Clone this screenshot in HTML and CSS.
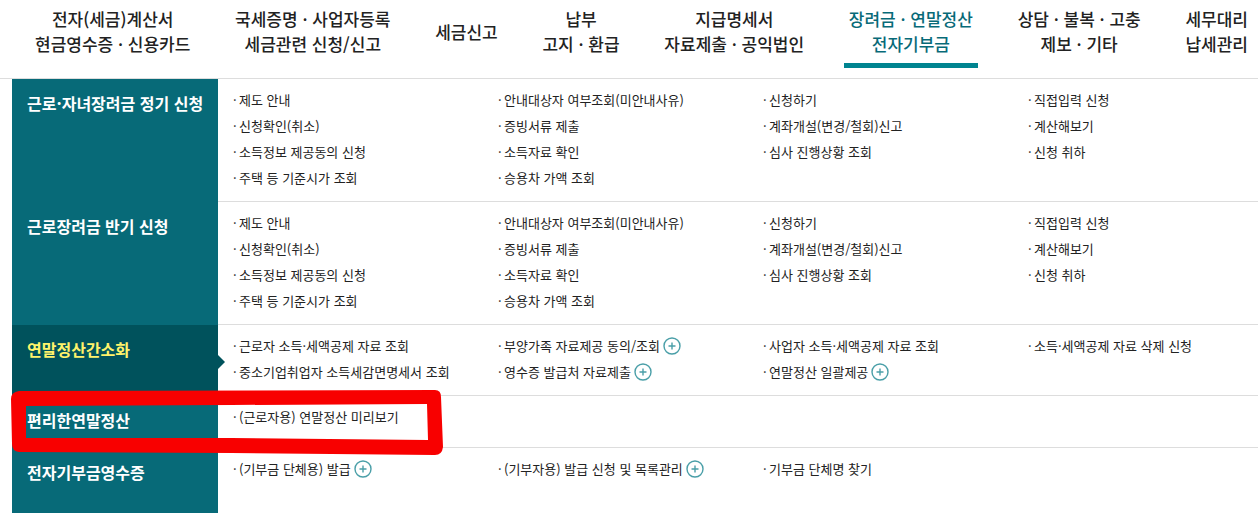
FILE: index.html
```
<!DOCTYPE html>
<html lang="ko">
<head>
  <meta charset="UTF-8" />
  <title>장려금 · 연말정산 · 전자기부금</title>
  <link rel="stylesheet" href="styles.css">
</head>
<body>
  <nav class="top-menu">
    <a href="#">전자(세금)계산서<br>현금영수증 · 신용카드</a>
    <a href="#">국세증명 · 사업자등록<br>세금관련 신청/신고</a>
    <a href="#">세금신고</a>
    <a href="#">납부<br>고지 · 환급</a>
    <a href="#">지급명세서<br>자료제출 · 공익법인</a>
    <a href="#" class="active">장려금 · 연말정산<br>전자기부금</a>
    <a href="#">상담 · 불복 · 고충<br>제보 · 기타</a>
    <a href="#">세무대리<br>납세관리</a>
  </nav>

  <main class="sub-menu">
    <section class="row">
      <h2>근로·자녀장려금 정기 신청</h2>
      <div class="links">
        <ul>
          <li><a href="#">제도 안내</a></li>
          <li><a href="#">신청확인(취소)</a></li>
          <li><a href="#">소득정보 제공동의 신청</a></li>
          <li><a href="#">주택 등 기준시가 조회</a></li>
        </ul>
        <ul>
          <li><a href="#">안내대상자 여부조회(미안내사유)</a></li>
          <li><a href="#">증빙서류 제출</a></li>
          <li><a href="#">소득자료 확인</a></li>
          <li><a href="#">승용차 가액 조회</a></li>
        </ul>
        <ul>
          <li><a href="#">신청하기</a></li>
          <li><a href="#">계좌개설(변경/철회)신고</a></li>
          <li><a href="#">심사 진행상황 조회</a></li>
        </ul>
        <ul>
          <li><a href="#">직접입력 신청</a></li>
          <li><a href="#">계산해보기</a></li>
          <li><a href="#">신청 취하</a></li>
        </ul>
      </div>
    </section>

    <section class="row">
      <h2>근로장려금 반기 신청</h2>
      <div class="links">
        <ul>
          <li><a href="#">제도 안내</a></li>
          <li><a href="#">신청확인(취소)</a></li>
          <li><a href="#">소득정보 제공동의 신청</a></li>
          <li><a href="#">주택 등 기준시가 조회</a></li>
        </ul>
        <ul>
          <li><a href="#">안내대상자 여부조회(미안내사유)</a></li>
          <li><a href="#">증빙서류 제출</a></li>
          <li><a href="#">소득자료 확인</a></li>
          <li><a href="#">승용차 가액 조회</a></li>
        </ul>
        <ul>
          <li><a href="#">신청하기</a></li>
          <li><a href="#">계좌개설(변경/철회)신고</a></li>
          <li><a href="#">심사 진행상황 조회</a></li>
        </ul>
        <ul>
          <li><a href="#">직접입력 신청</a></li>
          <li><a href="#">계산해보기</a></li>
          <li><a href="#">신청 취하</a></li>
        </ul>
      </div>
    </section>

    <section class="row current">
      <h2>연말정산간소화</h2>
      <div class="links">
        <ul>
          <li><a href="#">근로자 소득·세액공제 자료 조회</a></li>
          <li><a href="#">중소기업취업자 소득세감면명세서 조회</a></li>
        </ul>
        <ul>
          <li><a href="#">부양가족 자료제공 동의/조회</a><button class="plus" aria-label="펼치기"><svg viewBox="0 0 18 18"><circle cx="9" cy="9" r="8"/><path d="M5.5 9h7M9 5.5v7"/></svg></button></li>
          <li><a href="#">영수증 발급처 자료제출</a><button class="plus" aria-label="펼치기"><svg viewBox="0 0 18 18"><circle cx="9" cy="9" r="8"/><path d="M5.5 9h7M9 5.5v7"/></svg></button></li>
        </ul>
        <ul>
          <li><a href="#">사업자 소득·세액공제 자료 조회</a></li>
          <li><a href="#">연말정산 일괄제공</a><button class="plus" aria-label="펼치기"><svg viewBox="0 0 18 18"><circle cx="9" cy="9" r="8"/><path d="M5.5 9h7M9 5.5v7"/></svg></button></li>
        </ul>
        <ul>
          <li><a href="#">소득·세액공제 자료 삭제 신청</a></li>
        </ul>
      </div>
    </section>

    <section class="row">
      <h2>편리한연말정산</h2>
      <div class="links">
        <ul>
          <li><a href="#">(근로자용) 연말정산 미리보기</a></li>
        </ul>
      </div>
      <!-- red marker frame -->
      <svg class="marker" viewBox="0 0 432 66" aria-hidden="true">
        <path fill-rule="evenodd" d="M8 2 L424 1 Q430 1 430 8 L432 58 Q431 66 424 66 L220 64 L8 63 Q1 62 1 55 L0 10 Q0 3 8 2 Z M15 17 L15 49 L220 49 L417 51 L416 15 L220 16 Z"/>
      </svg>
    </section>

    <section class="row">
      <h2>전자기부금영수증</h2>
      <div class="links">
        <ul>
          <li><a href="#">(기부금 단체용) 발급</a><button class="plus" aria-label="펼치기"><svg viewBox="0 0 18 18"><circle cx="9" cy="9" r="8"/><path d="M5.5 9h7M9 5.5v7"/></svg></button></li>
        </ul>
        <ul>
          <li><a href="#">(기부자용) 발급 신청 및 목록관리</a><button class="plus" aria-label="펼치기"><svg viewBox="0 0 18 18"><circle cx="9" cy="9" r="8"/><path d="M5.5 9h7M9 5.5v7"/></svg></button></li>
        </ul>
        <ul>
          <li><a href="#">기부금 단체명 찾기</a></li>
        </ul>
      </div>
    </section>
  </main>
</body>
</html>
```
FILE: styles.css
```
* {
  box-sizing: border-box;
}

body {
  margin: 0;
  min-height: 100vh;
  display: flex;
  flex-direction: column;
  font-family: "Noto Sans CJK KR", sans-serif;
  background: #fff;
  color: #222;
}

a {
  color: inherit;
  text-decoration: none;
}

/* Top menu */
.top-menu {
  display: flex;
  justify-content: space-between;
  padding: 6px 10px 10px 35px;
  border-bottom: 1px solid #ddd;
  font-size: 17px;
  font-weight: 500;
  line-height: 25px;
  text-align: center;
  white-space: nowrap;
}

.top-menu a {
  display: flex;
  flex-direction: column;
  justify-content: center;
  height: 62px;
  padding-bottom: 12px;
}

.top-menu .active {
  margin: 0 -5px;
  padding: 0 5px 7px;
  border-bottom: 5px solid #008490;
  color: #076a78;
}

/* Sub menu */
.sub-menu {
  flex: 1;
  display: flex;
  flex-direction: column;
  padding-left: 12px;
}

.row {
  display: flex;
  position: relative;
}

.row:last-child {
  flex: 1;
}

.row h2 {
  position: relative;
  flex: 0 0 206px;
  margin: 0;
  padding: 11px 0 15px 15px;
  background: #076a78;
  color: #fff;
  font-size: 16px;
  font-weight: bold;
  line-height: 26px;
  white-space: nowrap;
}

.current h2 {
  background: #00525c;
  color: #fff36b;
}

.current h2::after {
  content: "";
  position: absolute;
  top: 50%;
  left: 100%;
  margin-top: -6px;
  border: 7px solid transparent;
  border-left-color: #00525c;
  border-right: none;
}

.links {
  flex: 1;
  display: grid;
  grid-template-columns: 265fr 265fr 265fr 230fr;
  padding: 8px 0 10px 15px;
  border-bottom: 1px solid #ddd;
}

.row:last-child .links {
  border-bottom: none;
}

.links ul {
  margin: 0;
  padding: 0;
  list-style: none;
}

.links li {
  display: flex;
  align-items: center;
  height: 26px;
  font-size: 13px;
  line-height: 26px;
  white-space: nowrap;
}

.links li::before {
  content: "·";
  width: 6px;
}

.plus {
  width: 18px;
  height: 18px;
  margin-left: 3px;
  padding: 0;
  border: none;
  background: none;
  cursor: pointer;
}

.plus svg {
  display: block;
  fill: none;
  stroke: #4a9fa8;
  stroke-width: 1.4;
}

.marker {
  position: absolute;
  z-index: 1;
  top: -7px;
  left: -1px;
  width: 432px;
  height: 66px;
  fill: #f80000;
  pointer-events: none;
}
```
